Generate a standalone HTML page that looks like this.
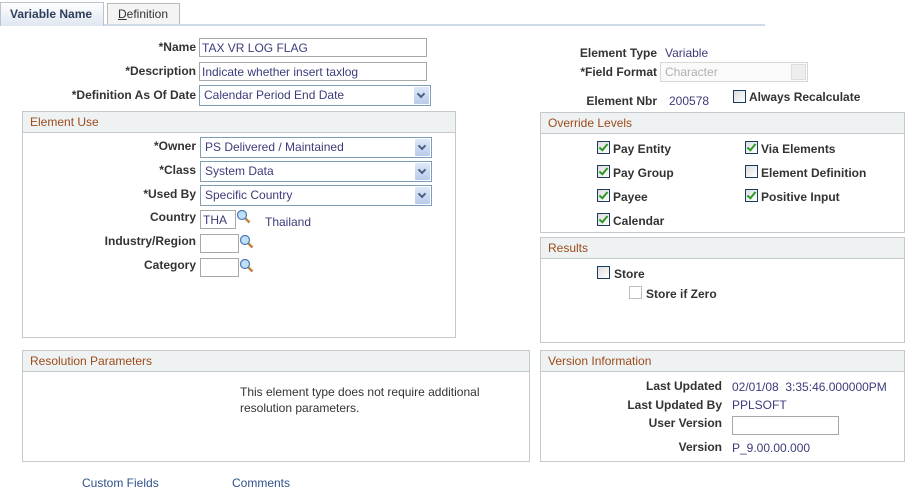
<!DOCTYPE html>
<html><head><style>
*{margin:0;padding:0;box-sizing:border-box}
body{width:910px;height:491px;background:#fff;position:relative;font-family:"Liberation Sans",Arial,sans-serif;font-size:12px;color:#333;overflow:hidden}
.a{position:absolute;white-space:nowrap}
.l{position:absolute;font-weight:bold;color:#333;text-align:right;white-space:nowrap}
.v{position:absolute;color:#3c3c7c;white-space:nowrap}
.in{position:absolute;border:1px solid #a8a8a8;background:#fff;color:#3c3c7c;padding:1px 2px;line-height:16px;white-space:nowrap;overflow:hidden}
.sel{position:absolute;border:1px solid #7f9db9;background:#fff;color:#3c3c7c;padding:1px 4px;line-height:16px;white-space:nowrap}
.sel i{position:absolute;right:1px;top:1px;width:15px;bottom:1px;background:linear-gradient(#dfe8f8,#b8cbec);border-radius:1px}
.sel i:after{content:"";position:absolute;left:4px;top:4px;width:4px;height:4px;border-right:2px solid #4d6185;border-bottom:2px solid #4d6185;transform:rotate(45deg)}
.box{position:absolute;border:1px solid #c5c9cd}
.box .h{height:21px;background:#eff2f3;border-bottom:1px solid #c5c9cd;color:#9c4b1a;padding-left:7px;line-height:20px;font-size:12px}
.cb{position:absolute;width:13px;height:13px;border:1px solid #1c3a5c;background:linear-gradient(135deg,#ddd,#fff)}
.cb.c:after{content:"";position:absolute;left:3px;top:0px;width:3px;height:7px;border-right:2px solid #2a9a2a;border-bottom:2px solid #2a9a2a;transform:rotate(40deg)}
.cb.d{border-color:#c0c0c0;background:#fff}
.mg{position:absolute;width:15px;height:15px}
a{color:#30508c;text-decoration:none}
</style></head><body>
<div class="a" style="left:0;top:24px;width:765px;height:2px;background:#cfdbeb"></div>
<div class="a" style="left:0;top:2px;width:104px;height:24px;background:linear-gradient(#fff,#dfe6f0);border:1px solid #b8c4d4;border-bottom:none;font-weight:bold;color:#2d3f5c;padding:4px 0 0 9px">Variable Name</div>
<div class="a" style="left:107px;top:3px;width:73px;height:21px;background:#f4f4f4;border:1px solid #b8b8b8;border-bottom:none;color:#333;padding:3px 0 0 10px"><u>D</u>efinition</div>

<div class="l" style="right:714px;top:40px">*Name</div>
<div class="in" style="left:199px;top:38px;width:228px;height:19px">TAX VR LOG FLAG</div>
<div class="l" style="right:714px;top:64px">*Description</div>
<div class="in" style="left:199px;top:62px;width:228px;height:19px">Indicate whether insert taxlog</div>
<div class="l" style="right:714px;top:88px">*Definition As Of Date</div>
<div class="sel" style="left:199px;top:85px;width:232px;height:21px">Calendar Period End Date<i></i></div>

<div class="box" style="left:22px;top:111px;width:434px;height:227px"><div class="h">Element Use</div></div>
<div class="l" style="right:714px;top:139px">*Owner</div>
<div class="sel" style="left:200px;top:137px;width:232px;height:21px">PS Delivered / Maintained<i></i></div>
<div class="l" style="right:714px;top:163px">*Class</div>
<div class="sel" style="left:200px;top:161px;width:232px;height:21px">System Data<i></i></div>
<div class="l" style="right:714px;top:187px">*Used By</div>
<div class="sel" style="left:200px;top:185px;width:232px;height:21px">Specific Country<i></i></div>
<div class="l" style="right:714px;top:210px">Country</div>
<div class="in" style="left:200px;top:210px;width:36px;height:19px">THA</div>
<svg class="mg" style="left:236px;top:209px" viewBox="0 0 15 15"><circle cx="6" cy="6" r="4.5" fill="#bfe0f8" stroke="#4a7ab0" stroke-width="1.2"/><path d="M9.5 9.5L13.5 13.5" stroke="#c08040" stroke-width="2.4"/></svg>
<div class="v" style="left:265px;top:215px">Thailand</div>
<div class="l" style="right:714px;top:234px">Industry/Region</div>
<div class="in" style="left:200px;top:234px;width:39px;height:19px"></div>
<svg class="mg" style="left:239px;top:234px" viewBox="0 0 15 15"><circle cx="6" cy="6" r="4.5" fill="#bfe0f8" stroke="#4a7ab0" stroke-width="1.2"/><path d="M9.5 9.5L13.5 13.5" stroke="#c08040" stroke-width="2.4"/></svg>
<div class="l" style="right:714px;top:258px">Category</div>
<div class="in" style="left:200px;top:258px;width:39px;height:19px"></div>
<svg class="mg" style="left:239px;top:258px" viewBox="0 0 15 15"><circle cx="6" cy="6" r="4.5" fill="#bfe0f8" stroke="#4a7ab0" stroke-width="1.2"/><path d="M9.5 9.5L13.5 13.5" stroke="#c08040" stroke-width="2.4"/></svg>

<div class="l" style="right:253px;top:46px">Element Type</div>
<div class="v" style="left:665px;top:46px">Variable</div>
<div class="l" style="right:253px;top:65px">*Field Format</div>
<div class="a" style="left:660px;top:62px;width:148px;height:20px;border:1px solid #d8d8d8;background:#fafafa;color:#b0b0b0;padding:2px 4px">Character<span style="position:absolute;right:1px;top:1px;width:15px;height:16px;background:#eee;border:1px solid #ddd"></span></div>
<div class="l" style="right:253px;top:94px">Element Nbr</div>
<div class="v" style="left:669px;top:94px">200578</div>
<div class="cb" style="left:733px;top:90px"></div>
<div class="l" style="left:749px;top:90px">Always Recalculate</div>

<div class="box" style="left:540px;top:112px;width:365px;height:121px"><div class="h">Override Levels</div></div>
<div class="cb c" style="left:597px;top:141px"></div><div class="l" style="left:613px;top:142px">Pay Entity</div>
<div class="cb c" style="left:597px;top:165px"></div><div class="l" style="left:613px;top:166px">Pay Group</div>
<div class="cb c" style="left:597px;top:189px"></div><div class="l" style="left:613px;top:190px">Payee</div>
<div class="cb c" style="left:597px;top:213px"></div><div class="l" style="left:613px;top:214px">Calendar</div>
<div class="cb c" style="left:745px;top:141px"></div><div class="l" style="left:761px;top:142px">Via Elements</div>
<div class="cb" style="left:745px;top:165px"></div><div class="l" style="left:761px;top:166px">Element Definition</div>
<div class="cb c" style="left:745px;top:189px"></div><div class="l" style="left:761px;top:190px">Positive Input</div>

<div class="box" style="left:540px;top:237px;width:365px;height:106px"><div class="h">Results</div></div>
<div class="cb" style="left:597px;top:266px"></div><div class="l" style="left:614px;top:267px">Store</div>
<div class="cb d" style="left:629px;top:286px"></div><div class="l" style="left:646px;top:287px">Store if Zero</div>

<div class="box" style="left:22px;top:350px;width:508px;height:112px"><div class="h">Resolution Parameters</div></div>
<div class="a" style="left:240px;top:384px;line-height:16px;color:#333">This element type does not require additional<br>resolution parameters.</div>

<div class="box" style="left:540px;top:350px;width:365px;height:112px"><div class="h">Version Information</div></div>
<div class="l" style="right:188px;top:379px">Last Updated</div>
<div class="v" style="left:732px;top:380px">02/01/08&nbsp; 3:35:46.000000PM</div>
<div class="l" style="right:188px;top:398px">Last Updated By</div>
<div class="v" style="left:732px;top:398px">PPLSOFT</div>
<div class="l" style="right:188px;top:416px">User Version</div>
<div class="in" style="left:732px;top:416px;width:107px;height:19px"></div>
<div class="l" style="right:188px;top:440px">Version</div>
<div class="v" style="left:732px;top:441px">P_9.00.00.000</div>

<div class="a" style="left:82px;top:476px"><a>Custom Fields</a></div>
<div class="a" style="left:232px;top:476px"><a>Comments</a></div>
</body></html>
